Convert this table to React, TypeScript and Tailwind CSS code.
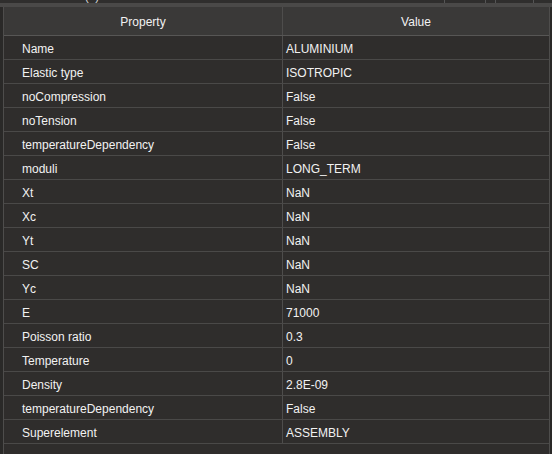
import React from "react";

const rows: [string, string][] = [
  ["Name", "ALUMINIUM"],
  ["Elastic type", "ISOTROPIC"],
  ["noCompression", "False"],
  ["noTension", "False"],
  ["temperatureDependency", "False"],
  ["moduli", "LONG_TERM"],
  ["Xt", "NaN"],
  ["Xc", "NaN"],
  ["Yt", "NaN"],
  ["SC", "NaN"],
  ["Yc", "NaN"],
  ["E", "71000"],
  ["Poisson ratio", "0.3"],
  ["Temperature", "0"],
  ["Density", "2.8E-09"],
  ["temperatureDependency", "False"],
  ["Superelement", "ASSEMBLY"],
];

export default function App() {
  return (
    <div
      className="w-[552px] h-[454px] overflow-hidden bg-[#2a2928] text-[12px] text-[#f2f2f2] flex flex-col"
      style={{ fontFamily: '"Liberation Sans", Arial, sans-serif' }}
    >
      <div className="h-[3px] overflow-hidden flex bg-[#2f2e2d]">
        <div className="pl-[20px] w-[444px] -mt-[11px] leading-[14px] text-[#d8d8d8]">Connectors (0)</div>
        <div className="w-[41px] border-l border-[#555]" />
        <div className="w-[10px] border-l border-[#555]" />
        <div className="w-[38px] border-l border-[#555]" />
        <div className="flex-1 border-l border-[#555]" />
      </div>
      <div className="h-[4px] bg-[#4a4948]" />
      <div className="flex-1 ml-[3px] w-[547px] border-l border-r border-[#4e4d4c] bg-[#2f2d2c] flex flex-col">
        <div className="grid grid-cols-[279px_1fr] h-[29px] bg-[#3a3938] border-b border-[#575655]">
          <div className="flex items-center justify-center pt-[2px] border-r border-[#4e4d4c]">Property</div>
          <div className="flex items-center justify-center pt-[2px]">Value</div>
        </div>
        {rows.map(([k, v], i) => (
          <div key={i} className="grid grid-cols-[279px_1fr] h-[24px] border-b border-[#4a4948]">
            <div className="flex items-center pl-[18px] pt-[2px] border-r border-[#4e4d4c]">{k}</div>
            <div className="flex items-center pl-[3px] pt-[2px]">{v}</div>
          </div>
        ))}
      </div>
    </div>
  );
}
